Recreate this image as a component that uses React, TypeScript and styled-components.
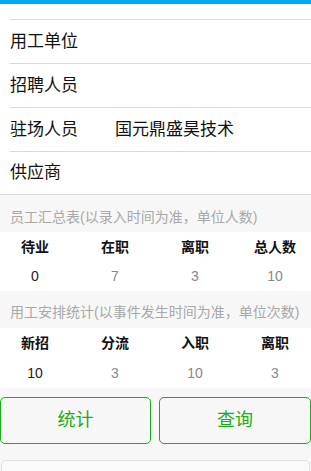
import React from "react";
import styled, { createGlobalStyle } from "styled-components";

const Global = createGlobalStyle`
  html, body { margin: 0; padding: 0; background: #f7f7f7; overflow: hidden; }
  body { font-family: "Liberation Sans", "Noto Sans CJK SC", sans-serif; -webkit-font-smoothing: antialiased; }
  * { box-sizing: border-box; }
`;

const Page = styled.div`
  width: 311px;
  height: 471px;
  overflow: hidden;
  background: #f7f7f7;
`;

const TopBar = styled.div`
  height: 4px;
  background: #00aaef;
`;

const List = styled.div`
  background: #fff;
  padding-top: 15px;
  border-bottom: 1px solid #d9d9d9;
`;

const Row = styled.div`
  display: flex;
  align-items: center;
  height: 44px;
  margin-left: 10px;
  padding-bottom: 5px;
  border-top: 1px solid #d9d9d9;
  font-size: 17px;
  color: #111;
  &:last-child { height: 43px; }
`;

const Label = styled.span`
  width: 105px;
`;

const Value = styled.span``;

const SectionTitle = styled.div<{ $top: number; $h: number }>`
  height: ${(p) => p.$h}px;
  padding: ${(p) => p.$top}px 10px 0;
  font-size: 14px;
  line-height: 20px;
  color: #a8a8a8;
  white-space: nowrap;
`;

const Table = styled.div`
  background: #fff;
  display: grid;
  grid-template-columns: repeat(4, 70px);
  column-gap: 10px;
`;

const Head = styled.div`
  height: 30px;
  padding-bottom: 2px;
  display: flex;
  align-items: center;
  justify-content: center;
  font-size: 14px;
  font-weight: bold;
  color: #111;
`;

const Cell = styled.div<{ $first?: boolean; $h: number }>`
  height: ${(p) => p.$h}px;
  padding-bottom: 1px;
  display: flex;
  align-items: center;
  justify-content: center;
  font-size: 14px;
  color: ${(p) => (p.$first ? "#222" : "#888")};
`;

const Buttons = styled.div`
  display: grid;
  grid-template-columns: 151px 152px;
  column-gap: 8px;
  padding-top: 9px;
`;

const Btn = styled.button`
  height: 47px;
  border: 1px solid #1aad19;
  border-radius: 5px;
  background: transparent;
  color: #1aad19;
  font-size: 18px;
  font-family: "Liberation Sans", "Noto Sans CJK SC", sans-serif;
  padding: 0 0 5px;
`;

const BottomBox = styled.div`
  margin: 16px 1px 0 1px;
  height: 40px;
  border: 1px solid #e0e0e0;
  border-radius: 5px;
  background: #fafafa;
`;

const Stats = ({ heads, vals, h }: { heads: string[]; vals: string[]; h: number }) => (
  <Table>
    {heads.map((t) => (
      <Head key={t}>{t}</Head>
    ))}
    {vals.map((v, i) => (
      <Cell key={i} $first={i === 0} $h={h}>
        {v}
      </Cell>
    ))}
  </Table>
);

export default function App() {
  return (
    <Page>
      <Global />
      <TopBar />
      <List>
        <Row><Label>用工单位</Label></Row>
        <Row><Label>招聘人员</Label></Row>
        <Row><Label>驻场人员</Label><Value>国元鼎盛昊技术</Value></Row>
        <Row><Label>供应商</Label></Row>
      </List>
      <SectionTitle $top={12} $h={37}>员工汇总表(以录入时间为准，单位人数)</SectionTitle>
      <Stats heads={["待业", "在职", "离职", "总人数"]} vals={["0", "7", "3", "10"]} h={29} />
      <SectionTitle $top={11} $h={37}>用工安排统计(以事件发生时间为准，单位次数)</SectionTitle>
      <Stats heads={["新招", "分流", "入职", "离职"]} vals={["10", "3", "10", "3"]} h={30} />
      <Buttons>
        <Btn>统计</Btn>
        <Btn>查询</Btn>
      </Buttons>
      <BottomBox />
    </Page>
  );
}
